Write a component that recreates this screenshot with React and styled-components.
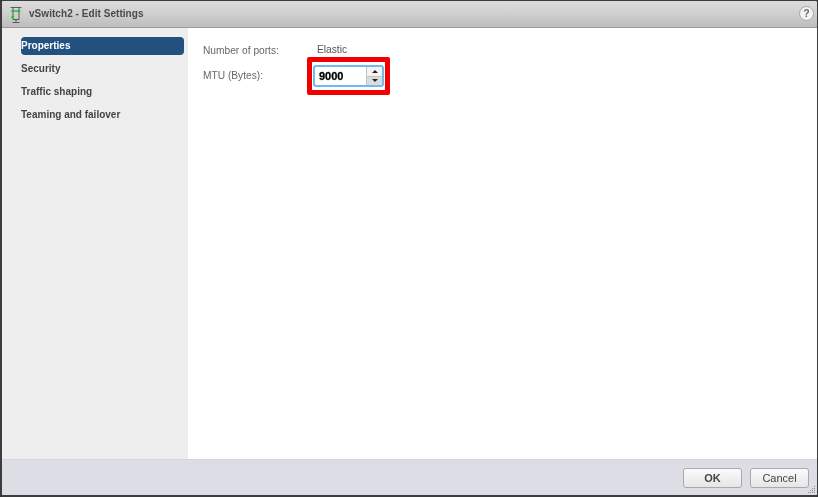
import React from 'react'
import styled, { createGlobalStyle } from 'styled-components'

const Global = createGlobalStyle`
  html, body { margin: 0; padding: 0; background: #333; }
  body { font-family: "Liberation Sans", Arial, sans-serif; }
`

const Dialog = styled.div`
  width: 818px;
  height: 497px;
  box-sizing: border-box;
  display: flex;
  flex-direction: column;
  background: #fff;
  border: solid #3c3c3c;
  border-width: 1px 1px 2px 2px;
  border-radius: 3px;
  overflow: hidden;
  filter: blur(0.3px);
`

const TitleBar = styled.div`
  height: 27px;
  flex: none;
  box-sizing: border-box;
  display: flex;
  align-items: center;
  padding: 0 3px 1px 6px;
  gap: 5px;
  background: linear-gradient(to bottom, #dcdcdc 0%, #cfcfcf 50%, #bdbdbd 100%);
  border-bottom: 1px solid #9b9b9b;
`

const TitleIcon = styled.svg`
  flex: none;
`

const Title = styled.span`
  flex: 1;
  font-size: 10px;
  font-weight: bold;
  letter-spacing: 0.05px;
  color: #4a4a4a;
`

const HelpButton = styled.span`
  width: 13px;
  height: 13px;
  border-radius: 50%;
  display: flex;
  align-items: center;
  justify-content: center;
  background: #f4f4f4;
  border: 1px solid #a5a5a5;
  font-size: 10px;
  font-weight: bold;
  color: #666;
`

const Body = styled.div`
  flex: 1;
  display: flex;
  min-height: 0;
`

const Sidebar = styled.ul`
  width: 186px;
  flex: none;
  box-sizing: border-box;
  margin: 0;
  padding: 9px 4px 0 19px;
  list-style: none;
  display: flex;
  flex-direction: column;
  gap: 5px;
  background: #eeeeee;
`

const NavItem = styled.li`
  height: 18px;
  box-sizing: border-box;
  display: flex;
  align-items: center;
  padding: 0 0 1px 0;
  border-radius: 4px;
  font-size: 10px;
  font-weight: bold;
  color: ${p => (p.$active ? '#fff' : '#444')};
  background: ${p => (p.$active ? '#22517f' : 'transparent')};
`

const Content = styled.div`
  flex: 1;
  display: grid;
  grid-template-columns: 104px auto;
  grid-auto-rows: min-content;
  justify-content: start;
  align-items: center;
  padding: 16px 0 0 15px;
  font-size: 10.2px;
  color: #666;
`

const PortsLabel = styled.span`
  padding-top: 1px;
`

const Value = styled.span`
  align-self: start;
  padding-left: 10px;
  color: #555;
`

const Highlight = styled.div`
  margin-top: 1px;
  width: 83px;
  height: 38px;
  box-sizing: border-box;
  display: flex;
  align-items: center;
  justify-content: center;
  border: 5px solid #f00000;
  border-radius: 2px;
  background: #fff;
`

const Spinner = styled.div`
  width: 71px;
  height: 22px;
  box-sizing: border-box;
  display: flex;
  border: 2px solid #6cbcec;
  border-radius: 3px;
  background: #fff;
`

const SpinInput = styled.span`
  flex: 1;
  display: flex;
  align-items: center;
  padding-left: 4px;
  font-size: 11px;
  font-weight: bold;
  color: #000;
  -webkit-text-stroke: 0.3px #000;
`

const SpinButtons = styled.div`
  width: 15px;
  display: flex;
  flex-direction: column;
  border-left: 1px solid #c4c4c4;
`

const SpinButton = styled.span`
  flex: 1;
  display: flex;
  align-items: center;
  justify-content: center;
  background: ${p => (p.$down ? '#dcdcdc' : '#f3f3f3')};
  border-top: ${p => (p.$down ? '1px solid #c4c4c4' : 'none')};
`

const Arrow = styled.span`
  width: 0;
  height: 0;
  border-left: 3px solid transparent;
  border-right: 3px solid transparent;
  ${p => (p.$down ? 'border-top: 3px solid #222;' : 'border-bottom: 3px solid #222;')}
`

const Footer = styled.div`
  height: 36px;
  flex: none;
  box-sizing: border-box;
  display: flex;
  align-items: center;
  justify-content: flex-end;
  gap: 8px;
  padding: 1px 8px 0 0;
  background: #dddde6;
  border-top: 1px solid #cfd6de;
  position: relative;
`

const Button = styled.button`
  width: ${p => p.$w}px;
  height: 20px;
  padding: 0;
  border: 1px solid #a9a9a9;
  border-radius: 3px;
  background: linear-gradient(to bottom, #fbfbfb, #e6e6e6);
  font-family: inherit;
  font-size: 11px;
  font-weight: ${p => (p.$primary ? 'bold' : 'normal')};
  color: #444;
`

const Grip = styled.svg`
  position: absolute;
  right: 1px;
  bottom: 1px;
`

function ResizeGrip() {
  const dots = [[7, 1], [5, 3], [7, 3], [3, 5], [5, 5], [7, 5], [1, 7], [3, 7], [5, 7], [7, 7]]
  return (
    <Grip width="9" height="9" viewBox="0 0 9 9">
      {dots.map(([x, y]) => <rect key={`${x}-${y}`} x={x} y={y} width="1" height="1" fill="#8a8a8a" />)}
    </Grip>
  )
}

function SwitchIcon() {
  return (
    <TitleIcon width="16" height="18" viewBox="0 0 16 18">
      <path d="M2.5 2.5h11M5 2.5v12M11 2.5v12H5M8 14.5v3M4.5 17.5h7M5 6h6" fill="none" stroke="#5c5c5c" strokeWidth="1" />
      <circle cx="4.7" cy="6" r="1.5" fill="#14d020" />
      <circle cx="11" cy="6" r="1.5" fill="#14d020" />
      <circle cx="4.7" cy="12" r="1.5" fill="#14d020" />
    </TitleIcon>
  )
}

const navItems = ['Properties', 'Security', 'Traffic shaping', 'Teaming and failover']

export default function App() {
  return (
    <>
      <Global />
      <Dialog>
        <TitleBar>
          <SwitchIcon />
          <Title>vSwitch2 - Edit Settings</Title>
          <HelpButton>?</HelpButton>
        </TitleBar>
        <Body>
          <Sidebar>
            {navItems.map((item, i) => <NavItem key={item} $active={i === 0}>{item}</NavItem>)}
          </Sidebar>
          <Content>
            <PortsLabel>Number of ports:</PortsLabel>
            <Value>Elastic</Value>
            <span>MTU (Bytes):</span>
            <Highlight>
              <Spinner>
                <SpinInput>9000</SpinInput>
                <SpinButtons>
                  <SpinButton><Arrow /></SpinButton>
                  <SpinButton $down><Arrow $down /></SpinButton>
                </SpinButtons>
              </Spinner>
            </Highlight>
          </Content>
        </Body>
        <Footer>
          <Button $w={59} $primary>OK</Button>
          <Button $w={59}>Cancel</Button>
          <ResizeGrip />
        </Footer>
      </Dialog>
    </>
  )
}
